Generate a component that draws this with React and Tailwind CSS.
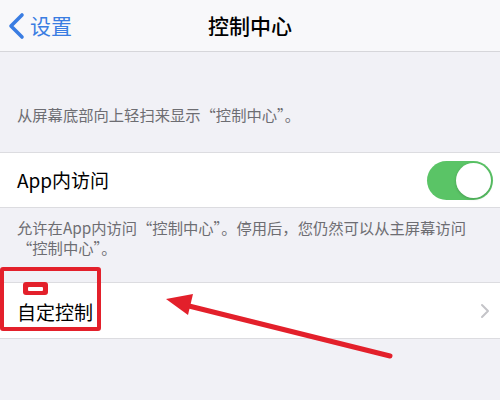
import React from 'react';

const font = { fontFamily: '"Noto Sans CJK SC", "Noto Sans", sans-serif' };

export default function App() {
  return (
    <div className="relative w-[500px] h-[400px] overflow-hidden bg-[#f1f1f6]" style={font}>
      {/* nav bar */}
      <div className="relative h-[52px] bg-[#f8f8fa] border-b border-[#d6d6da] flex items-center">
        <div className="flex items-center pl-[7px] text-[#3a7de2]">
          <svg width="18" height="28" viewBox="0 0 18 28" fill="none">
            <path d="M15 3 L4 14 L15 25" stroke="#3a7de2" strokeWidth="3.6" strokeLinecap="round" strokeLinejoin="round" />
          </svg>
          <span className="ml-[5px] text-[21px] leading-none">设置</span>
        </div>
        <div className="absolute inset-0 flex items-center justify-center text-[21px] font-medium text-black leading-none">
          控制中心
        </div>
      </div>

      {/* description */}
      <div className="h-[100px] flex items-end px-[17px] pb-[30px]">
        <span className="text-[15.3px] text-[#6d6d72] leading-none">从屏幕底部向上轻扫来显示“控制中心”。</span>
      </div>

      {/* App 内访问 row */}
      <div className="h-[56px] bg-white border-y border-[#dcdce0] flex items-center justify-between pl-[17px] pr-[7px]">
        <span className="text-[19px] text-black">App内访问</span>
        <div className="w-[66px] h-[39px] rounded-full bg-[#5ac466] flex items-center justify-end pr-[2px]">
          <div className="w-[35px] h-[35px] rounded-full bg-white shadow-[0_1px_3px_rgba(0,0,0,0.2)]" />
        </div>
      </div>

      {/* footer */}
      <div className="h-[74px] px-[17px] pt-[9px] text-[15.3px] leading-[20px] text-[#6d6d72]">
        <div className="whitespace-nowrap">允许在App内访问“控制中心”。停用后，您仍然可以从主屏幕访问</div>
        <div className="whitespace-nowrap">“控制中心”。</div>
      </div>

      {/* 自定控制 row */}
      <div className="h-[57px] bg-white border-y border-[#dcdce0] flex items-center justify-between pl-[17px] pr-[10px]">
        <span className="text-[19px] text-black pt-[3px]">自定控制</span>
        <svg width="10" height="16" viewBox="0 0 10 16" fill="none">
          <path d="M2 2 L8 8 L2 14" stroke="#c4c4c8" strokeWidth="2" strokeLinecap="round" strokeLinejoin="round" />
        </svg>
      </div>

      {/* annotation: red box */}
      <div className="absolute left-0 top-[267px] w-[101px] h-[64px] border-[4px] border-[#e3202b] rounded-[3px]" />
      <div className="absolute left-[23px] top-[282px] w-[25px] h-[13px] rounded-[3px] bg-[#e3202b] flex items-center justify-center">
        <div className="w-[15px] h-[4px] bg-white rounded-[1px]" />
      </div>

      {/* annotation: arrow */}
      <svg className="absolute left-0 top-0" width="500" height="400" viewBox="0 0 500 400">
        <line x1="185" y1="305" x2="390" y2="356" stroke="#e3202b" strokeWidth="5" strokeLinecap="round" />
        <polygon points="166,299 193,294 188,315" fill="#e3202b" />
      </svg>
    </div>
  );
}
